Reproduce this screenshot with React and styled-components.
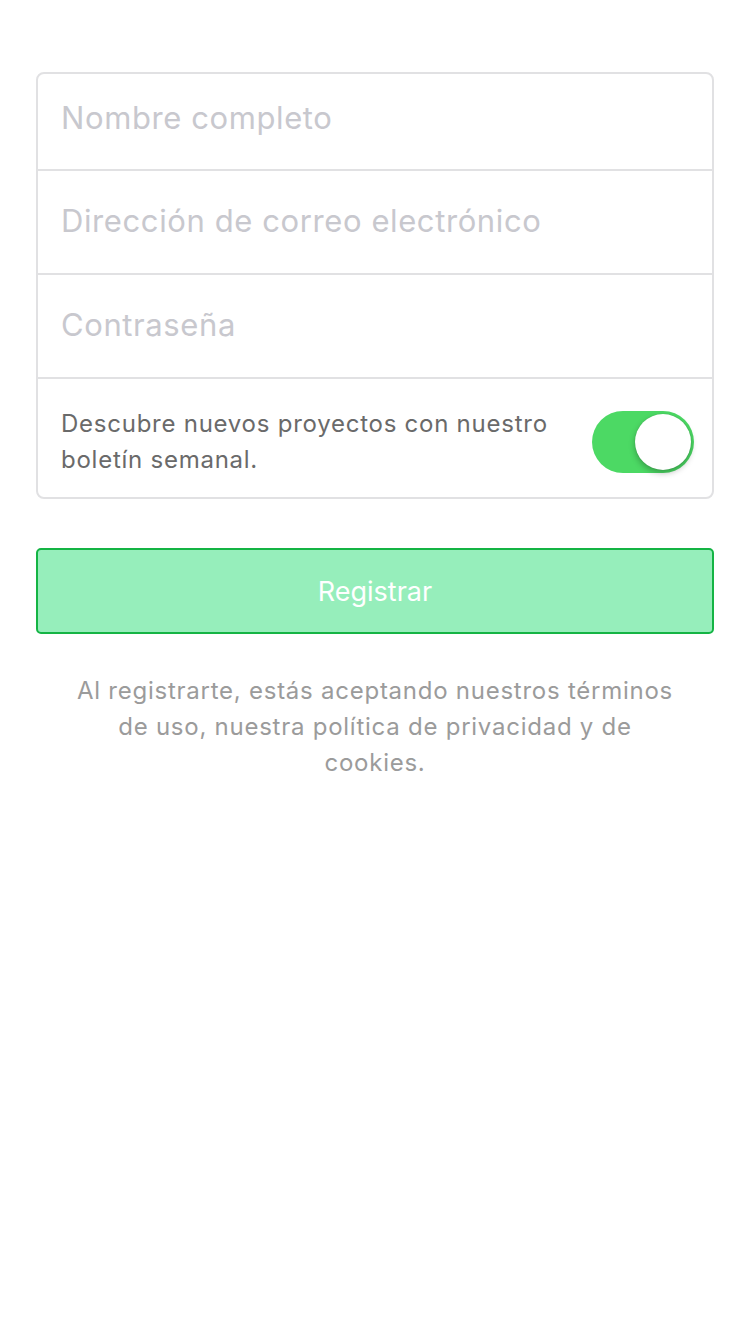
import React, { useState } from 'react';
import styled, { createGlobalStyle } from 'styled-components';

const GlobalStyle = createGlobalStyle`
  html, body {
    margin: 0;
    padding: 0;
    background: #fff;
    font-family: Inter, "Open Sans", "Liberation Sans", sans-serif;
  }
`;

const Page = styled.div`
  width: 750px;
  min-height: 1334px;
  box-sizing: border-box;
  padding: 72px 36px 0;
  background: #fff;
`;

const Card = styled.div`
  border: 2px solid #e1e1e3;
  border-radius: 8px;
  overflow: hidden;
`;

const Row = styled.div`
  display: flex;
  align-items: center;
  height: ${p => p.h}px;
  padding: ${p => (p.shift > 0 ? p.shift : 0)}px 18px ${p => (p.shift < 0 ? -p.shift : 0)}px 23px;
  border-top: ${p => (p.first ? 'none' : '2px solid #e1e1e3')};
  box-sizing: border-box;
`;

const Field = styled.input`
  flex: 1;
  border: none;
  outline: none;
  background: transparent;
  font-family: inherit;
  font-size: 31px;
  letter-spacing: 0.6px;
  color: #333;
  padding: 0;
  &::placeholder {
    color: #c8c8ce;
  }
`;

const Label = styled.div`
  flex: 1;
  font-size: 24px;
  letter-spacing: 0.75px;
  line-height: 36px;
  color: #6a6a6a;
`;

const Switch = styled.button`
  position: relative;
  width: 102px;
  height: 62px;
  border-radius: 31px;
  border: none;
  padding: 0;
  background: #4cd964;
  cursor: pointer;
  flex-shrink: 0;
`;

const Knob = styled.span`
  position: absolute;
  top: 3px;
  left: ${p => (p.on ? '43px' : '3px')};
  width: 56px;
  height: 56px;
  border-radius: 50%;
  background: #fff;
  box-shadow: 0 3px 6px rgba(0, 0, 0, 0.28), 0 0 1px rgba(0, 0, 0, 0.2);
`;

const Submit = styled.button`
  display: block;
  width: 100%;
  height: 86px;
  margin-top: 49px;
  border: 2px solid #14b444;
  border-radius: 5px;
  background: #96eebb;
  color: #fff;
  font-family: inherit;
  font-size: 27px;
`;

const Legal = styled.p`
  margin: 39px 0 0;
  padding: 0 36px;
  text-align: center;
  font-size: 24px;
  letter-spacing: 0.75px;
  line-height: 36px;
  color: #9b9b9b;
`;

export default function App() {
  const [on, setOn] = useState(true);
  return (
    <Page>
      <GlobalStyle />
      <Card>
        <Row first h={95} shift={-9}>
          <Field placeholder="Nombre completo" />
        </Row>
        <Row h={104} shift={-4}>
          <Field placeholder="Dirección de correo electrónico" />
        </Row>
        <Row h={104} shift={-4}>
          <Field type="password" placeholder="Contraseña" />
        </Row>
        <Row h={120} shift={8}>
          <Label>
            Descubre nuevos proyectos con nuestro
            <br />
            boletín semanal.
          </Label>
          <Switch onClick={() => setOn(!on)}>
            <Knob on={on} />
          </Switch>
        </Row>
      </Card>
      <Submit>Registrar</Submit>
      <Legal>
        Al registrarte, estás aceptando nuestros términos de uso, nuestra política de privacidad y de cookies.
      </Legal>
    </Page>
  );
}
